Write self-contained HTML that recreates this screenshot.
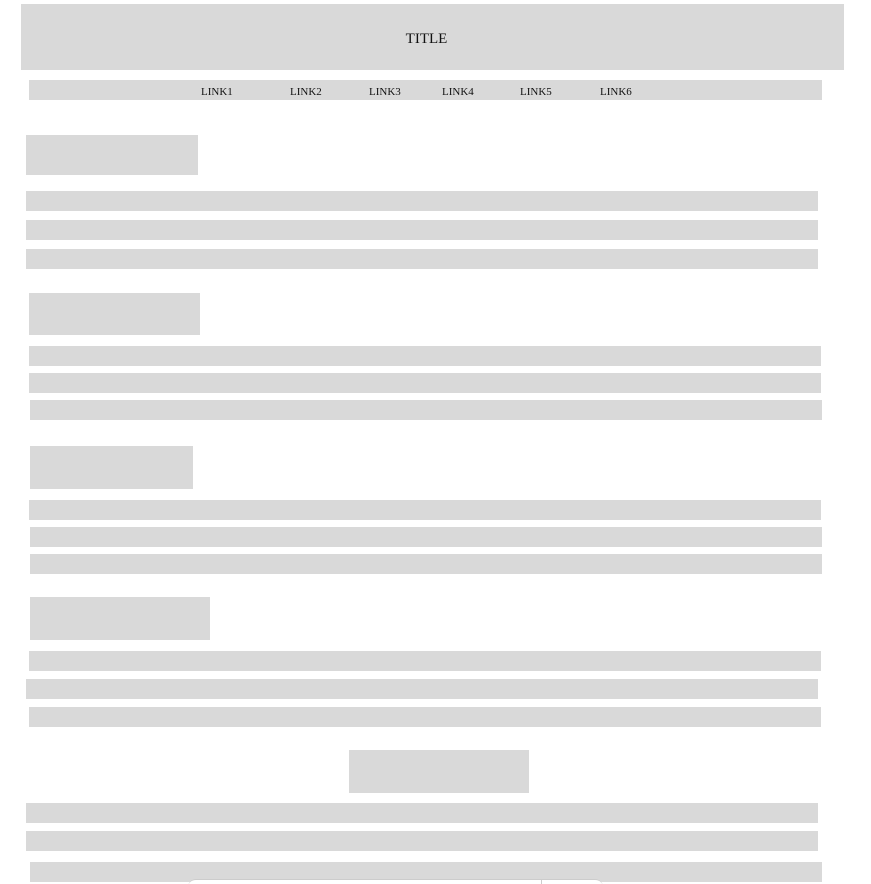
<!DOCTYPE html>
<html><head><meta charset="utf-8"><style>
html,body{margin:0;padding:0;background:#fff;width:871px;height:884px;overflow:hidden;position:relative}
.b{position:absolute;background:#d9d9d9}
.t{position:absolute;font-family:"Liberation Serif","DejaVu Serif",serif;color:#111}
</style></head><body>
<div class="b" style="left:21px;top:4px;width:823px;height:66px"></div>
<div class="t" style="left:0;width:853px;top:31px;text-align:center;font-size:15px">TITLE</div>
<div class="b" style="left:29px;top:80px;width:793px;height:20px"></div>
<div class="t" style="left:201px;top:86px;font-size:11px">LINK1</div>
<div class="t" style="left:290px;top:86px;font-size:11px">LINK2</div>
<div class="t" style="left:369px;top:86px;font-size:11px">LINK3</div>
<div class="t" style="left:442px;top:86px;font-size:11px">LINK4</div>
<div class="t" style="left:520px;top:86px;font-size:11px">LINK5</div>
<div class="t" style="left:600px;top:86px;font-size:11px">LINK6</div>

<div class="b" style="left:26px;top:135px;width:172px;height:40px"></div>
<div class="b" style="left:26px;top:191px;width:792px;height:20px"></div>
<div class="b" style="left:26px;top:220px;width:792px;height:20px"></div>
<div class="b" style="left:26px;top:249px;width:792px;height:20px"></div>

<div class="b" style="left:29px;top:293px;width:171px;height:42px"></div>
<div class="b" style="left:29px;top:346px;width:792px;height:20px"></div>
<div class="b" style="left:29px;top:373px;width:792px;height:20px"></div>
<div class="b" style="left:30px;top:400px;width:792px;height:20px"></div>

<div class="b" style="left:30px;top:446px;width:163px;height:43px"></div>
<div class="b" style="left:29px;top:500px;width:792px;height:20px"></div>
<div class="b" style="left:30px;top:527px;width:792px;height:20px"></div>
<div class="b" style="left:30px;top:554px;width:792px;height:20px"></div>

<div class="b" style="left:30px;top:597px;width:180px;height:43px"></div>
<div class="b" style="left:29px;top:651px;width:792px;height:20px"></div>
<div class="b" style="left:26px;top:679px;width:792px;height:20px"></div>
<div class="b" style="left:29px;top:707px;width:792px;height:20px"></div>

<div class="b" style="left:349px;top:750px;width:180px;height:43px"></div>
<div class="b" style="left:26px;top:803px;width:792px;height:20px"></div>
<div class="b" style="left:26px;top:831px;width:792px;height:20px"></div>
<div class="b" style="left:30px;top:862px;width:792px;height:20px"></div>
<div style="position:absolute;left:188px;top:879px;width:415px;height:20px;background:#fff;border-radius:8px;border-top:1px solid #ccc"></div>
<div style="position:absolute;left:541px;top:879px;width:1px;height:5px;background:#ccc"></div>
</body></html>
